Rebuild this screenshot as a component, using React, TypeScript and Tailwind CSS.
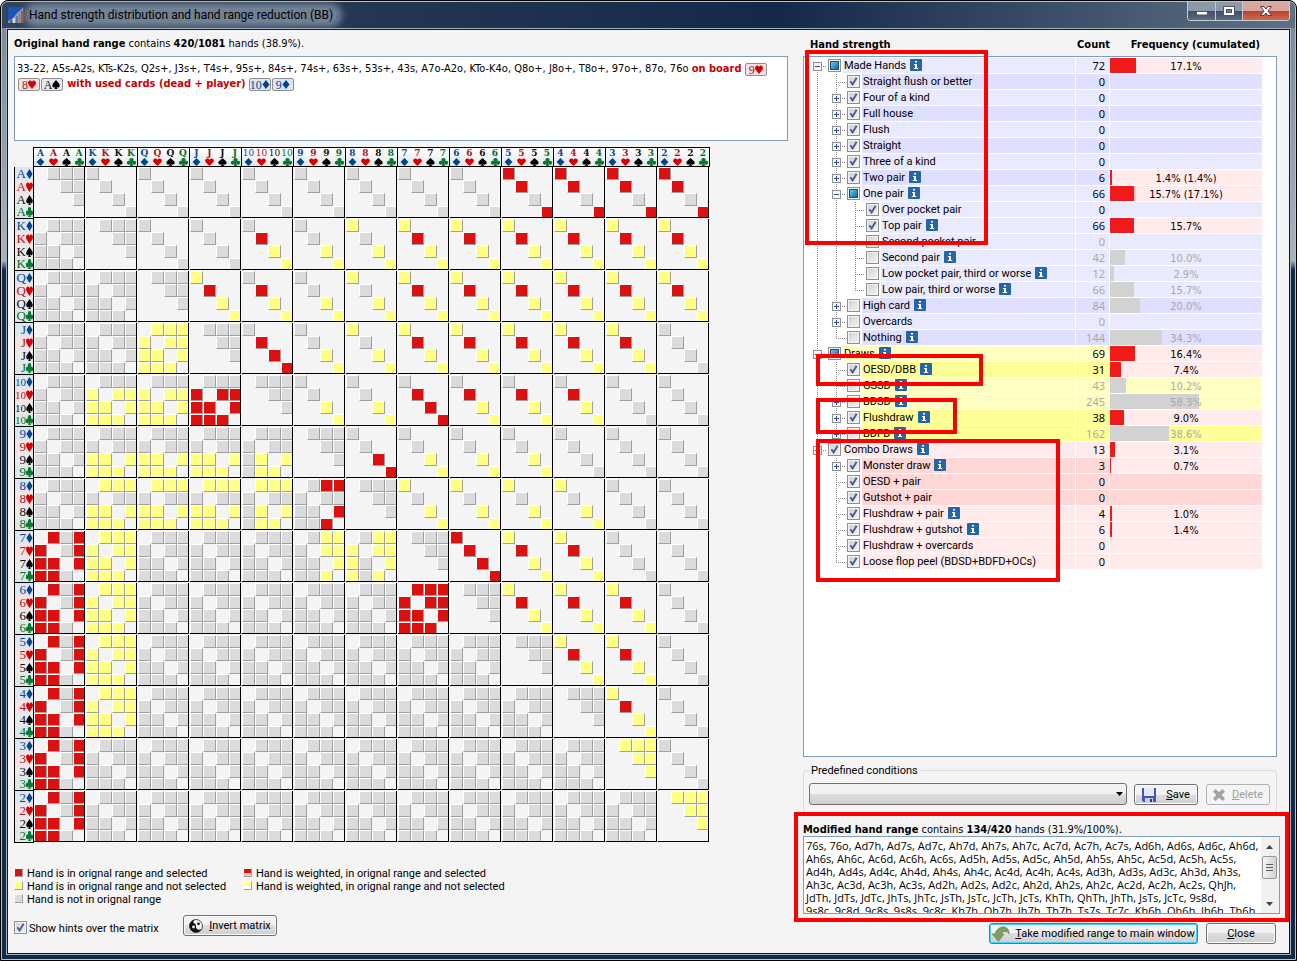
import { useState } from 'react';
import type { ReactNode } from 'react';

type Suit = 'd' | 'h' | 's' | 'c';

const SUITS: Suit[] = ['d', 'h', 's', 'c'];
const RANKS = ['A', 'K', 'Q', 'J', '10', '9', '8', '7', '6', '5', '4', '3', '2'];

const SUIT_PATHS: Record<Suit, string> = {
    d: 'M5 0L9.4 5L5 10L0.6 5Z',
    h: 'M5 10L0.7 5.2C-0.6 3.2 0.4 0.5 2.6 0.5C3.8 0.5 4.6 1.2 5 2.2C5.4 1.2 6.2 0.5 7.4 0.5C9.6 0.5 10.6 3.2 9.3 5.2Z',
    s: 'M5 0L9 4.2C10.6 6.4 8.8 8.8 7 8.2C6.4 8 6 7.7 5.7 7.2L6.8 10H3.2L4.3 7.2C4 7.7 3.6 8 3 8.2C1.2 8.8 -0.6 6.4 1 4.2Z',
    c: 'M5 0A2.3 2.3 0 0 1 6.9 3.7A2.4 2.4 0 1 1 5.8 7L7 10H3L4.2 7A2.4 2.4 0 1 1 3.1 3.7A2.3 2.3 0 0 1 5 0Z',
};
const SUIT_TEXT: Record<Suit, string> = {
    d: 'text-[#0b4a8f]',
    h: 'text-[#a01c1c]',
    s: 'text-[#111111]',
    c: 'text-[#0a6a2e]',
};
const SUIT_FILL: Record<Suit, string> = {
    d: 'fill-[#034488]',
    h: 'fill-[#d60000]',
    s: 'fill-[#000000]',
    c: 'fill-[#087830]',
};
const SUIT_BG: Record<Suit, string> = {
    d: 'bg-[#dde6ef]',
    h: 'bg-[#f5e2e4]',
    s: 'bg-[#e9e9ec]',
    c: 'bg-[#dfe9e4]',
};

// suited combos above the diagonal, one letter per suit: g = not in range, y = in range, r = selected
const SUITED: Record<string, string> = {
    'A-5': 'rrgr', 'A-4': 'rrgr', 'A-3': 'rrgr', 'A-2': 'rrgr',
    'K-10': 'gryy', 'K-9': 'ggyy', 'K-8': 'ygyy', 'K-7': 'yryy', 'K-6': 'yryy', 'K-5': 'yryy', 'K-4': 'yryy', 'K-3': 'yryy', 'K-2': 'yryy',
    'Q-J': 'yryy', 'Q-10': 'gryy', 'Q-9': 'ggyy', 'Q-8': 'ygyy', 'Q-7': 'yryy', 'Q-6': 'yryy', 'Q-5': 'yryy', 'Q-4': 'yryy', 'Q-3': 'yryy', 'Q-2': 'yryy',
    'J-10': 'grrr', 'J-9': 'ggyy', 'J-8': 'ygyy', 'J-7': 'yryy', 'J-6': 'yryy', 'J-5': 'yryy', 'J-4': 'yryy', 'J-3': 'yryy',
    '10-9': 'ggyy', '10-8': 'ggyy', '10-7': 'grrr', '10-6': 'gryy', '10-5': 'gryy', '10-4': 'gryy',
    '9-8': 'ggrr', '9-7': 'ggyy', '9-6': 'ggyy', '9-5': 'ggyy',
    '8-7': 'ygyy', '8-6': 'ygyy', '8-5': 'ygyy', '8-4': 'ygyy',
    '7-6': 'rrrr', '7-5': 'yryy', '7-4': 'yryy',
    '6-5': 'yryy', '6-4': 'yryy', '6-3': 'yryy',
    '5-4': 'yryy', '5-3': 'yryy',
    '4-3': 'yryy',
};

const ALL_GRAY = '.ggg g.gg gg.g ggg.';
const ALL_YELLOW = '.yyy y.yy yy.y yyy.';
const ACE_SELECTED = '.rgr r.gr rr.r rrg.';

// offsuit combos below the diagonal, row by row
const OFFSUIT: Record<string, string> = {
    'J-Q': ALL_YELLOW,
    '10-K': '.ggg y.yy yy.y yyy.',
    '10-Q': '.ggg y.yy yy.y yyy.',
    '10-J': '.ggg r.rr rr.r rrr.',
    '9-K': '.ggg g.gg yy.y yyy.',
    '9-Q': '.ggg g.gg yy.y yyy.',
    '9-J': '.ggg g.gg yy.y yyy.',
    '9-10': '.ggg g.gg gy.y gyy.',
    '8-K': '.yyy g.gg yy.y yyy.',
    '8-Q': '.yyy g.gg yy.y yyy.',
    '8-J': '.yyy g.gg yy.y yyy.',
    '8-10': '.yyy g.gg gy.y gyy.',
    '8-9': '.grr g.gg gg.r ggr.',
    '7-A': ACE_SELECTED,
    '7-K': ALL_YELLOW,
    '7-9': '.gyy g.yy gg.y ggy.',
    '7-8': '.gyy y.yy yg.y ygy.',
    '6-A': ACE_SELECTED,
    '6-K': ALL_YELLOW,
    '6-7': '.rrr r.rr rr.r rrr.',
    '5-A': ACE_SELECTED,
    '5-K': ALL_YELLOW,
    '4-A': ACE_SELECTED,
    '4-K': ALL_YELLOW,
    '3-A': ACE_SELECTED,
    '2-A': ACE_SELECTED,
};

function blockPattern(row: number, col: number): string {
    const key = `${RANKS[row]}-${RANKS[col]}`;
    if (row === col) {
        return row >= 11 ? '.yyy..yy...y....' : '.ggg..gg...g....';
    }
    if (row > col) {
        return (OFFSUIT[key] ?? ALL_GRAY).replaceAll(' ', '');
    }
    const s = SUITED[key] ?? 'gggg';
    return `${s[0]}....${s[1]}....${s[2]}....${s[3]}`;
}

const SQUARE: Record<string, string> = {
    '.': 'size-[13px]',
    g: 'size-[13px] border border-t-white border-l-white border-r-[#a0a0a0] border-b-[#a0a0a0] bg-[#dbdbdb]',
    y: 'size-[13px] border border-t-white border-l-white border-r-[#a0a0a0] border-b-[#a0a0a0] bg-[#ffff84]',
    r: 'size-[13px] border border-t-white border-l-white border-r-[#a0a0a0] border-b-[#a0a0a0] bg-[#dd1010]',
};

function SuitIcon({ suit, className }: { suit: Suit; className: string }) {
    return (
        <svg viewBox="0 0 10 10" preserveAspectRatio="none" className={`${className} ${SUIT_FILL[suit]}`} aria-hidden="true">
            <path d={SUIT_PATHS[suit]} />
        </svg>
    );
}

function Matrix() {
    return (
        <table className="border-separate border-spacing-0 self-start">
            <thead>
                <tr>
                    <td className="w-5 border-r border-black p-0" />
                    {RANKS.map((rank) => (
                        <th key={rank} className="border-y border-r border-black p-0 font-normal">
                            <div className="grid h-[18px] w-[51px] grid-cols-[13px_13px_13px_12px]">
                                {SUITS.map((suit) => (
                                    <span key={suit} className={`flex flex-col items-center justify-between ${SUIT_BG[suit]} bg-linear-to-b from-white to-transparent`}>
                                        <span className={`font-['DejaVu_Serif',serif] text-[9px] leading-[10px] ${SUIT_TEXT[suit]} ${rank === '10' ? '' : 'font-bold'}`}>{rank}</span>
                                        <SuitIcon suit={suit} className="h-2 w-[9px]" />
                                    </span>
                                ))}
                            </div>
                        </th>
                    ))}
                </tr>
            </thead>
            <tbody>
                {RANKS.map((rank, row) => (
                    <tr key={rank}>
                        <th className="border-x border-b border-black p-0 font-normal">
                            <div className="h-[51px] w-[18px]">
                                {SUITS.map((suit) => (
                                    <div key={suit} className={`flex h-[13px] items-center justify-end last:h-3 ${SUIT_BG[suit]}`}>
                                        <span className={`font-['Liberation_Serif',serif] leading-[12px] ${SUIT_TEXT[suit]} ${rank === '10' ? 'text-[11px]' : 'text-[13px]'}`}>{rank}</span>
                                        <SuitIcon suit={suit} className="h-[10px] w-[7px] shrink-0" />
                                    </div>
                                ))}
                            </div>
                        </th>
                        {RANKS.map((other, col) => (
                            <td key={other} className="p-0 pr-px pb-px">
                                <div className="size-[51px] overflow-hidden border-r border-b border-black">
                                    <div className="grid w-[52px] grid-cols-4">
                                        {blockPattern(row, col).split('').map((c, i) => (
                                            <div key={i} className={SQUARE[c]} />
                                        ))}
                                    </div>
                                </div>
                            </td>
                        ))}
                    </tr>
                ))}
            </tbody>
        </table>
    );
}

type CheckState = 'on' | 'off' | 'mixed';
type Guide = 'line' | 'none' | 'tee' | 'elbow' | 'plus' | 'minus';

interface StrengthRow {
    name: string;
    guides: Guide[];
    state: CheckState;
    info?: boolean;
    count: number;
    pct?: number;
    cumulated?: number;
    bg: string;
    last?: boolean;
}

const B1 = 'bg-[#eaeaff]';
const B2 = 'bg-[#dfdfff]';
const Y1 = 'bg-[#ffffc4]';
const Y2 = 'bg-[#ffff97]';
const R1 = 'bg-[#ffebeb]';
const R2 = 'bg-[#ffd7d7]';

const ROWS: StrengthRow[] = [
    { name: 'Made Hands', guides: ['minus'], state: 'mixed', info: true, count: 72, pct: 17.1, bg: B1 },
    { name: 'Straight flush or better', guides: ['line', 'tee'], state: 'on', count: 0, bg: B2 },
    { name: 'Four of a kind', guides: ['line', 'plus'], state: 'on', count: 0, bg: B1 },
    { name: 'Full house', guides: ['line', 'plus'], state: 'on', count: 0, bg: B2 },
    { name: 'Flush', guides: ['line', 'plus'], state: 'on', count: 0, bg: B1 },
    { name: 'Straight', guides: ['line', 'plus'], state: 'on', count: 0, bg: B2 },
    { name: 'Three of a kind', guides: ['line', 'plus'], state: 'on', count: 0, bg: B1 },
    { name: 'Two pair', guides: ['line', 'plus'], state: 'on', info: true, count: 6, pct: 1.4, cumulated: 1.4, bg: B2 },
    { name: 'One pair', guides: ['line', 'minus'], state: 'mixed', info: true, count: 66, pct: 15.7, cumulated: 17.1, bg: B1 },
    { name: 'Over pocket pair', guides: ['line', 'line', 'tee'], state: 'on', count: 0, bg: B1 },
    { name: 'Top pair', guides: ['line', 'line', 'tee'], state: 'on', info: true, count: 66, pct: 15.7, bg: B1 },
    { name: 'Second pocket pair', guides: ['line', 'line', 'tee'], state: 'off', count: 0, bg: B1 },
    { name: 'Second pair', guides: ['line', 'line', 'tee'], state: 'off', info: true, count: 42, pct: 10.0, bg: B1 },
    { name: 'Low pocket pair, third or worse', guides: ['line', 'line', 'tee'], state: 'off', info: true, count: 12, pct: 2.9, bg: B1 },
    { name: 'Low pair, third or worse', guides: ['line', 'line', 'elbow'], state: 'off', info: true, count: 66, pct: 15.7, bg: B1 },
    { name: 'High card', guides: ['line', 'plus'], state: 'off', info: true, count: 84, pct: 20.0, bg: B2 },
    { name: 'Overcards', guides: ['line', 'plus'], state: 'off', count: 0, bg: B1 },
    { name: 'Nothing', guides: ['line', 'elbow'], state: 'off', info: true, count: 144, pct: 34.3, bg: B2 },
    { name: 'Draws', guides: ['minus'], state: 'mixed', info: true, count: 69, pct: 16.4, bg: Y1 },
    { name: 'OESD/DBB', guides: ['line', 'tee'], state: 'on', info: true, count: 31, pct: 7.4, bg: Y2 },
    { name: 'GSSD', guides: ['line', 'tee'], state: 'off', info: true, count: 43, pct: 10.2, bg: Y1 },
    { name: 'BDSD', guides: ['line', 'plus'], state: 'off', info: true, count: 245, pct: 58.3, bg: Y1 },
    { name: 'Flushdraw', guides: ['line', 'plus'], state: 'on', info: true, count: 38, pct: 9.0, bg: Y2 },
    { name: 'BDFD', guides: ['line', 'plus'], state: 'off', info: true, count: 162, pct: 38.6, bg: Y2, last: true },
    { name: 'Combo Draws', guides: ['minus'], state: 'on', info: true, count: 13, pct: 3.1, bg: R1, last: true },
    { name: 'Monster draw', guides: ['none', 'plus'], state: 'on', info: true, count: 3, pct: 0.7, bg: R2 },
    { name: 'OESD + pair', guides: ['none', 'tee'], state: 'on', count: 0, bg: R2 },
    { name: 'Gutshot + pair', guides: ['none', 'tee'], state: 'on', count: 0, bg: R2 },
    { name: 'Flushdraw + pair', guides: ['none', 'tee'], state: 'on', info: true, count: 4, pct: 1.0, bg: R1 },
    { name: 'Flushdraw + gutshot', guides: ['none', 'tee'], state: 'on', info: true, count: 6, pct: 1.4, bg: R1 },
    { name: 'Flushdraw + overcards', guides: ['none', 'tee'], state: 'on', count: 0, bg: R1 },
    { name: 'Loose flop peel (BDSD+BDFD+OCs)', guides: ['none', 'elbow'], state: 'on', count: 0, bg: R1 },
];

function TreeGuide({ kind, first, last }: { kind: Guide; first?: boolean; last?: boolean }) {
    if (kind === 'none') {
        return <span className="w-[19px] shrink-0" />;
    }
    const expander = kind === 'plus' || kind === 'minus';
    const drawing = (
        <svg viewBox="0 0 19 16" className="h-4 w-[19px] shrink-0" shapeRendering="crispEdges" aria-hidden="true">
            <g stroke="#8a8a8a" strokeDasharray="1 1">
                {!first && <path d="M9.5 0V8" />}
                {kind !== 'elbow' && !last && <path d="M9.5 8V16" />}
                {kind !== 'line' && <path d="M9 8.5H18" />}
            </g>
            {expander && (
                <>
                    <rect x="5.5" y="4.5" width="8" height="8" fill="#f6f6f6" stroke="#919191" />
                    <path d="M7 8.5H12" stroke="#2b4f9e" />
                    {kind === 'plus' && <path d="M9.5 6V11" stroke="#2b4f9e" />}
                </>
            )}
        </svg>
    );
    if (expander) {
        return (
            <button type="button" aria-label={kind === 'plus' ? 'Expand' : 'Collapse'} className="shrink-0">
                {drawing}
            </button>
        );
    }
    return drawing;
}

function Checkbox({ id, state }: { id: string; state: CheckState }) {
    const [checked, setChecked] = useState(state === 'on');
    return (
        <span className="grid size-[13px] shrink-0">
            <input
                id={id}
                type="checkbox"
                checked={checked}
                onChange={(e) => setChecked(e.target.checked)}
                className="col-start-1 row-start-1 size-[13px] appearance-none border border-[#8e8f8f] bg-[#f4f4f4] bg-linear-to-br from-[#cfd0d3] to-[#f6f6f6] shadow-[inset_0_0_0_1px_#f4f4f4]"
            />
            {checked && (
                <svg viewBox="0 0 13 13" className="pointer-events-none col-start-1 row-start-1 size-[13px]" aria-hidden="true">
                    <path d="M3.4 6.2L5.6 9.4L9.6 2.8" fill="none" stroke="#4b5f97" strokeWidth="2" />
                </svg>
            )}
            {state === 'mixed' && !checked && (
                <span className="pointer-events-none col-start-1 row-start-1 m-[2px] border border-[#13527c] bg-linear-to-br from-[#62d0f2] to-[#0d679d]" />
            )}
        </span>
    );
}

function InfoIcon() {
    return (
        <svg viewBox="0 0 12 12" className="mt-px size-3 shrink-0" aria-hidden="true">
            <rect width="12" height="12" rx="1" fill="#2566a5" />
            <path d="M5 2H7V3.6H5ZM4 5H7V9H8.2V10H3.8V9H5V6H4Z" fill="#fff" />
        </svg>
    );
}

function StrengthTable() {
    return (
        <table className="w-full table-fixed border-collapse">
            <colgroup>
                <col />
                <col className="w-[35px]" />
                <col className="w-[152px]" />
            </colgroup>
            <tbody>
                {ROWS.map((r, i) => {
                    const off = r.state === 'off';
                    const active = !off && r.pct !== undefined;
                    const id = `strength-${i}`;
                    return (
                        <tr key={r.name} className="h-4">
                            <td className="p-0">
                                <div className="flex h-4 items-start pl-1">
                                    {r.guides.map((g, k) => (
                                        <TreeGuide key={k} kind={g} first={i === 0} last={r.last && k === r.guides.length - 1} />
                                    ))}
                                    <span className="mx-px mt-px">
                                        <Checkbox id={id} state={r.state} />
                                    </span>
                                    <span className={`ml-px flex h-[15px] flex-1 items-start gap-1 pl-px ${r.bg}`}>
                                        <label htmlFor={id} className="leading-[16px] whitespace-nowrap">{r.name}</label>
                                        {r.info && <InfoIcon />}
                                    </span>
                                </div>
                            </td>
                            <td className="p-0">
                                <div className={`mx-px mb-px h-[15px] pr-1 text-right font-['Noto_Sans',sans-serif] leading-[15px] ${r.bg} ${off ? 'text-[#a8a8a8]' : ''}`}>{r.count}</div>
                            </td>
                            <td className="p-0">
                                <div className={`mb-px grid h-[15px] ${active ? 'bg-[#ffebeb]' : r.bg}`}>
                                    {r.cumulated && (
                                        <span className="col-start-1 row-start-1 h-[15px] bg-[#ffc4c4]" style={{ width: `${r.cumulated}%` }} />
                                    )}
                                    {r.pct && (
                                        <>
                                            <span
                                                className={`col-start-1 row-start-1 h-[15px] ${off ? 'bg-[#d2d2d2]' : 'bg-[#f01a1a]'}`}
                                                style={{ width: `${r.pct}%` }}
                                            />
                                            <span className={`col-start-1 row-start-1 text-center font-['DejaVu_Sans_Condensed',sans-serif] leading-[17px] ${off ? 'text-[#a8a8a8]' : ''}`}>
                                                {r.pct.toFixed(1)}%{r.cumulated && ` (${r.cumulated}%)`}
                                            </span>
                                        </>
                                    )}
                                </div>
                            </td>
                        </tr>
                    );
                })}
            </tbody>
        </table>
    );
}

function Card({ rank, suit }: { rank: string; suit: Suit }) {
    return (
        <span className={`mr-px inline-flex h-[13px] w-[22px] items-center justify-center rounded-[2px] border border-[#8d8d93] align-bottom ${SUIT_BG[suit]}`}>
            <span className={`font-['Liberation_Serif',serif] text-[12px] leading-[12px] ${SUIT_TEXT[suit]}`}>{rank}</span>
            <SuitIcon suit={suit} className="h-[9px] w-2 shrink-0" />
        </span>
    );
}

function WinButton({ children, className = '', disabled }: { children: ReactNode; className?: string; disabled?: boolean }) {
    return (
        <button
            type="button"
            disabled={disabled}
            className={`flex h-[21px] items-center justify-center rounded-[3px] border leading-[15px] whitespace-nowrap ${
                disabled
                    ? 'border-[#adb2b5] bg-[#f4f4f4] text-[#a0a0a0]'
                    : 'border-[#707070] bg-linear-to-b from-[#f2f2f2] from-50% via-[#dddddd] via-50% to-[#cfcfcf] shadow-[inset_0_0_0_1px_#fbfbfb]'
            } ${className}`}
        >
            {children}
        </button>
    );
}

function LegendItem({ swatch, children }: { swatch: string; children: ReactNode }) {
    return (
        <li className="flex h-[13px] items-center gap-1">
            <span className={`size-[9px] shrink-0 border border-t-white border-l-white border-r-[#a0a0a0] border-b-[#a0a0a0] ${swatch}`} />
            <span className="pt-px">{children}</span>
        </li>
    );
}

const MODIFIED_RANGE = `76s, 76o, Ad7h, Ad7s, Ad7c, Ah7d, Ah7s, Ah7c, Ac7d, Ac7h, Ac7s, Ad6h, Ad6s, Ad6c, Ah6d,
Ah6s, Ah6c, Ac6d, Ac6h, Ac6s, Ad5h, Ad5s, Ad5c, Ah5d, Ah5s, Ah5c, Ac5d, Ac5h, Ac5s,
Ad4h, Ad4s, Ad4c, Ah4d, Ah4s, Ah4c, Ac4d, Ac4h, Ac4s, Ad3h, Ad3s, Ad3c, Ah3d, Ah3s,
Ah3c, Ac3d, Ac3h, Ac3s, Ad2h, Ad2s, Ad2c, Ah2d, Ah2s, Ah2c, Ac2d, Ac2h, Ac2s, QhJh,
JdTh, JdTs, JdTc, JhTs, JhTc, JsTh, JsTc, JcTh, JcTs, KhTh, QhTh, JhTh, JsTs, JcTc, 9s8d,
9s8c, 9c8d, 9c8s, 9s8s, 9c8c, Kh7h, Qh7h, Jh7h, Th7h, Ts7s, Tc7c, Kh6h, Qh6h, Jh6h, Th6h,`;

function TitleBar() {
    return (
        <header className="flex h-[26px] items-start justify-between">
            <div className="flex items-center gap-[5px] pt-[5px] pl-[6px]">
                <svg viewBox="0 0 16 16" className="size-4" aria-hidden="true">
                    <rect width="16" height="16" fill="#1b55b8" />
                    <path d="M0 14L5 11L9 6L15 1V16H0Z" fill="#8f9bb4" />
                    <path d="M2 13H4V16H2Z" fill="#5d6378" />
                    <path d="M5 11H7V16H5Z" fill="#d7d7df" />
                    <path d="M8 9H10V16H8Z" fill="#6c7388" />
                    <path d="M11 7H12.5V16H11Z" fill="#4fa46a" />
                    <path d="M13 4H15V16H13Z" fill="#cf3a3a" />
                </svg>
                <h1 className="rounded-full bg-[#8494a5]/80 pr-1 text-[12px] leading-[14px] text-black shadow-[0_0_7px_5px_rgba(132,148,165,0.8)]">
                    Hand strength distribution and hand range reduction (BB)
                </h1>
            </div>
            <div className="mr-[5px] flex h-[19px] overflow-hidden rounded-b-[4px] border border-t-0 border-[#c3ccd5]">
                <button type="button" aria-label="Minimize" className="grid w-[28px] place-items-center border-r border-[#c3ccd5] bg-linear-to-b from-[#8b99a9] from-50% via-[#3d4f66] via-50% to-[#5b6c80]">
                    <svg viewBox="0 0 12 10" className="h-[10px] w-3" aria-hidden="true">
                        <rect x="0.5" y="5.5" width="11" height="3.5" fill="#fff" stroke="#4b5666" />
                    </svg>
                </button>
                <button type="button" aria-label="Maximize" className="grid w-[27px] place-items-center border-r border-[#c3ccd5] bg-linear-to-b from-[#8b99a9] from-50% via-[#3d4f66] via-50% to-[#5b6c80]">
                    <svg viewBox="0 0 12 10" className="h-[10px] w-3" aria-hidden="true">
                        <rect x="0.5" y="0.5" width="11" height="9" fill="#fff" stroke="#4b5666" />
                        <rect x="3.5" y="3.5" width="5" height="3" fill="#6d7d90" stroke="#4b5666" />
                    </svg>
                </button>
                <button type="button" aria-label="Close window" className="grid w-[46px] place-items-center bg-linear-to-b from-[#d9a79f] from-50% via-[#b8412c] via-50% to-[#cf6a4e]">
                    <svg viewBox="0 0 12 10" className="h-[10px] w-3" aria-hidden="true">
                        <path d="M0.5 0.5H4L6 3L8 0.5H11.5L8 5L11.5 9.5H8L6 7L4 9.5H0.5L4 5Z" fill="#fff" stroke="#5b3b40" />
                    </svg>
                </button>
            </div>
        </header>
    );
}

export default function App() {
    return (
        <div className="flex min-h-screen flex-col rounded-t-[8px] border border-black bg-black font-['Roboto',Tahoma,sans-serif] text-[11px] leading-[13px] text-black">
            <div className="flex flex-1 flex-col rounded-t-[7px] border border-[#b4c4d4] bg-linear-to-r from-[#31445b] via-[#12294a] via-60% to-[#5f7183]">
                <TitleBar />
                <div className="flex flex-1 bg-linear-to-b from-[#7d8b99] from-0% via-[#a9b2bb] via-25% to-[#12294a] to-26% px-1 pb-1">
                    <main className="flex flex-1 border border-[#a3b3c2] bg-[#12294a]">
                        <div className="flex flex-1 gap-[15px] border border-[#0c1826] bg-[#f4f4f4] pr-3 pl-[6px]">
                            {/* Original range */}
                            <section className="flex flex-1 flex-col">
                                <p className="h-[26px] pt-[7px] font-['DejaVu_Sans_Condensed',sans-serif]">
                                    <b>Original hand range</b> contains <b>420/1081</b> hands (38.9%).
                                </p>
                                <div className="mb-[6px] h-[85px] border border-[#7f9db9] bg-white px-[2px] pt-1 font-['DejaVu_Sans_Condensed',sans-serif] leading-[15px] whitespace-nowrap">
                                    33-22, A5s-A2s, KTs-K2s, Q2s+, J3s+, T4s+, 95s+, 84s+, 74s+, 63s+, 53s+, 43s, A7o-A2o, KTo-K4o, Q8o+, J8o+, T8o+, 97o+, 87o, 76o{' '}
                                    <b className="text-[#c80000]">on board</b> <Card rank="9" suit="h" />
                                    <br />
                                    <span className="pl-px" />
                                    <Card rank="8" suit="h" />
                                    <Card rank="A" suit="s" /> <b className="text-[#c80000]">with used cards (dead + player)</b>{' '}
                                    <Card rank="10" suit="d" />
                                    <Card rank="9" suit="d" />
                                </div>

                                <Matrix />

                                <div className="mt-[23px] flex gap-5">
                                    <ul className="w-[209px] whitespace-nowrap">
                                        <LegendItem swatch="bg-[#dd1010]">Hand is in orignal range and selected</LegendItem>
                                        <LegendItem swatch="bg-[#ffff84]">Hand is in orignal range and not selected</LegendItem>
                                        <LegendItem swatch="bg-[#dbdbdb]">Hand is not in orignal range</LegendItem>
                                    </ul>
                                    <ul className="whitespace-nowrap">
                                        <LegendItem swatch="bg-linear-to-b from-[#dd1010] from-50% to-[#ffbcbc] to-50%">
                                            Hand is weighted, in orignal range and selected
                                        </LegendItem>
                                        <LegendItem swatch="bg-linear-to-b from-[#ffff84] from-50% to-white to-50%">
                                            Hand is weighted, in orignal range and not selected
                                        </LegendItem>
                                    </ul>
                                </div>

                                <div className="mt-[10px] flex items-center">
                                    <div className="flex w-[169px] items-center gap-[2px] pt-1">
                                        <Checkbox id="show-hints" state="on" />
                                        <label htmlFor="show-hints" className="pt-px">Show hints over the matrix</label>
                                    </div>
                                    <WinButton className="w-[94px] gap-[6px]">
                                        <svg viewBox="0 0 14 14" className="size-[14px]" aria-hidden="true">
                                            <circle cx="7" cy="7" r="6.5" fill="#f2f2f2" stroke="#555" />
                                            <path d="M7 0.5A6.5 6.5 0 0 0 7 13.500A6.5 6.5 0 0 0 13.500 7.500A3.250 3.250 0 0 1 7 7.500A3.250 3.250 0 0 0 4.500 4A3 3 0 0 1 7 0.5Z" fill="#111" />
                                            <circle cx="4.500" cy="8" r="1.4" fill="#f2f2f2" />
                                            <circle cx="9.500" cy="4.800" r="1.4" fill="#111" />
                                        </svg>
                                        <span><u>I</u>nvert matrix</span>
                                    </WinButton>
                                </div>
                            </section>

                            {/* Hand strength */}
                            <section className="flex w-[474px] flex-col">
                                <div className="flex h-[26px] pt-2 pl-[7px] font-['DejaVu_Sans_Condensed',sans-serif] font-bold">
                                    <span className="flex-1">Hand strength</span>
                                    <span className="w-[50px] text-right">Count</span>
                                    <span className="w-[167px] pr-[17px] text-right">Frequency (cumulated)</span>
                                </div>
                                <div className="relative flex-1 border border-[#7f9db9] bg-white pt-px pr-[14px]">
                                    <StrengthTable />
                                    <div className="pointer-events-none absolute top-[-7px] left-px h-[195px] w-[183px] border-4 border-[#ff0000]" />
                                    <div className="pointer-events-none absolute top-[297px] left-[12px] h-[32px] w-[167px] border-4 border-[#ff0000]" />
                                    <div className="pointer-events-none absolute top-[341px] left-[12px] h-[36px] w-[141px] border-4 border-[#ff0000]" />
                                    <div className="pointer-events-none absolute top-[382px] left-[12px] h-[143px] w-[244px] border-4 border-[#ff0000]" />
                                </div>

                                <fieldset className="mt-[7px] flex h-[49px] gap-[7px] rounded-[3px] border border-[#d5dfe5] pt-[6px] pr-[6px] pl-[5px]">
                                    <legend className="ml-px px-px leading-[13px]">Predefined conditions</legend>
                                    <span className="grid h-[22px] flex-1">
                                        <select
                                            aria-label="Predefined conditions"
                                            className="col-start-1 row-start-1 appearance-none rounded-[3px] border border-[#707070] bg-linear-to-b from-[#f2f2f2] from-50% via-[#dddddd] via-50% to-[#cfcfcf]"
                                        >
                                            <option />
                                        </select>
                                        <svg viewBox="0 0 7 4" className="pointer-events-none col-start-1 row-start-1 mr-1 h-1 w-[7px] self-center justify-self-end" aria-hidden="true">
                                            <path d="M0 0H7L3.5 4Z" />
                                        </svg>
                                    </span>
                                    <WinButton className="mt-px w-16 gap-[10px]">
                                        <svg viewBox="0 0 14 14" className="size-[14px]" aria-hidden="true">
                                            <path d="M0 0H14V14H1.5L0 12.5Z" fill="#4353b8" />
                                            <path d="M2 0H12V8H2Z" fill="#e4e9fa" />
                                            <path d="M3 10H11V14H3Z" fill="#c9cde0" />
                                            <path d="M8 11H10V14H8Z" fill="#2b3680" />
                                        </svg>
                                        <span><u>S</u>ave</span>
                                    </WinButton>
                                    <WinButton disabled className="mt-px ml-px w-16 gap-[7px]">
                                        <svg viewBox="0 0 12 12" className="size-3" aria-hidden="true">
                                            <path d="M2.5 0L6 3.3L9.5 0L12 2.5L8.7 6L12 9.5L9.5 12L6 8.7L2.5 12L0 9.5L3.3 6L0 2.5Z" fill="#a3a3a3" />
                                        </svg>
                                        <span><u>D</u>elete</span>
                                    </WinButton>
                                </fieldset>

                                <div className="relative mt-[9px] -mr-[3px]">
                                    <p className="h-[14px] pt-px font-['DejaVu_Sans_Condensed',sans-serif]">
                                        <b>Modified hand range</b> contains <b>134/420</b> hands (31.9%/100%).
                                    </p>
                                    <div className="flex h-[78px] border border-[#7f9db9] bg-white">
                                        <textarea
                                            readOnly
                                            aria-label="Modified hand range"
                                            value={MODIFIED_RANGE}
                                            className="flex-1 resize-none overflow-hidden pt-[2px] pl-[2px] font-['Open_Sans',sans-serif] leading-[13px] whitespace-pre outline-none"
                                        />
                                        <div className="flex w-[18px] flex-col items-center bg-[#f1f1f1] pt-2 pr-px pb-[7px]">
                                            <svg viewBox="0 0 7 4" className="h-1 w-[7px] fill-[#444444]" aria-hidden="true">
                                                <path d="M0 4L3.5 0L7 4Z" />
                                            </svg>
                                            <span className="mt-[7px] grid h-[23px] w-[15px] place-items-center rounded-[2px] border border-[#979797] bg-linear-to-r from-[#f5f5f5] to-[#d2d2d2]">
                                                <svg viewBox="0 0 7 8" className="h-2 w-[7px]" shapeRendering="crispEdges" aria-hidden="true">
                                                    <path d="M0 0.5H7M0 3.5H7M0 6.5H7" stroke="#5f5f5f" />
                                                </svg>
                                            </span>
                                            <svg viewBox="0 0 7 4" className="mt-auto h-1 w-[7px] fill-[#444444]" aria-hidden="true">
                                                <path d="M0 0H7L3.5 4Z" />
                                            </svg>
                                        </div>
                                    </div>
                                    <div className="pointer-events-none absolute -inset-x-[9px] -top-[10px] -bottom-[8px] border-4 border-[#ff0000]" />
                                </div>

                                <div className="mt-[9px] mb-[9px] flex justify-end gap-2 pr-px">
                                    <button
                                        type="button"
                                        className="flex h-[21px] w-[209px] items-center justify-center gap-[5px] rounded-[3px] border border-[#3c7fb1] bg-linear-to-b from-[#f2f2f2] from-50% via-[#dddddd] via-50% to-[#cfcfcf] leading-[15px] whitespace-nowrap shadow-[inset_0_0_0_1px_#48d0f2]"
                                    >
                                        <svg viewBox="0 0 18 16" className="h-4 w-[18px] shrink-0" aria-hidden="true">
                                            <path d="M0 8H3C4 3 9 0 13 1C16 2 17.5 5 17 8C15.5 5.5 12 4.5 9.5 8H12L6.5 15.5Z" fill="#7da05f" stroke="#5f8549" strokeWidth="0.5" />
                                        </svg>
                                        <span><u>T</u>ake modified range to main window</span>
                                    </button>
                                    <WinButton className="w-[70px]">
                                        <span><u>C</u>lose</span>
                                    </WinButton>
                                </div>
                            </section>
                        </div>
                    </main>
                </div>
            </div>
        </div>
    );
}
